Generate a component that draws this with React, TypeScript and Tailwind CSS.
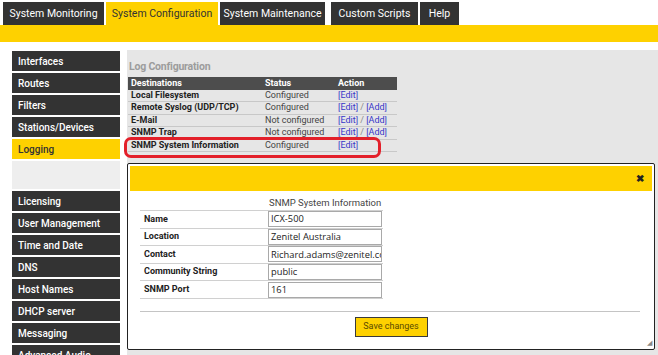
import React from 'react';

const tabs = [
  { label: 'System Monitoring', w: 'w-[101px]' },
  { label: 'System Configuration', w: 'w-[112px]', active: true },
  { label: 'System Maintenance', w: 'w-[105px]' },
  { label: 'Custom Scripts', w: 'w-[87px]', gapL: true },
  { label: 'Help', w: 'w-[39px]' },
];

const sideTop = ['Interfaces', 'Routes', 'Filters', 'Stations/Devices'];
const sideBottom = ['Licensing', 'User Management', 'Time and Date', 'DNS', 'Host Names', 'DHCP server', 'Messaging', 'Advanced Audio'];

const logRows = [
  { name: 'Local Filesystem', status: 'Configured', add: false },
  { name: 'Remote Syslog (UDP/TCP)', status: 'Configured', add: true },
  { name: 'E-Mail', status: 'Not configured', add: true },
  { name: 'SNMP Trap', status: 'Not configured', add: true },
  { name: 'SNMP System Information', status: 'Configured', add: false },
];

const fields = [
  { label: 'Name', value: 'ICX-500' },
  { label: 'Location', value: 'Zenitel Australia' },
  { label: 'Contact', value: 'Richard.adams@zenitel.com' },
  { label: 'Community String', value: 'public' },
  { label: 'SNMP Port', value: '161' },
];

const SideItem: React.FC<{ label: string; active?: boolean }> = ({ label, active }) => (
  <div
    className={`h-[20px] flex items-center pl-[6px] text-[10px] font-medium whitespace-nowrap ${
      active ? 'bg-[#fed100] text-[#333]' : 'bg-[#333333] text-white'
    }`}
  >
    {label}
  </div>
);

const App: React.FC = () => {
  return (
    <div className="w-[658px] h-[355px] overflow-hidden bg-white relative font-['Roboto',sans-serif]">
      {/* Top tabs */}
      <div className="flex items-end h-[25px] pl-[3px] pt-[2px] gap-[2px]">
        {tabs.map((t) => (
          <div
            key={t.label}
            className={`${t.w} h-[23px] flex items-center justify-center text-[10.5px] whitespace-nowrap ${t.gapL ? 'ml-[4px]' : ''} ${
              t.active ? 'bg-[#fed100] text-[#333]' : 'bg-[#333333] text-white'
            }`}
          >
            {t.label}
          </div>
        ))}
      </div>
      <div className="h-[17px] bg-[#fed100]" />

      <div className="flex pt-[8px]">
        {/* Sidebar */}
        <div className="w-[108px] ml-[12px] flex flex-col gap-[2px] pt-[1px] shrink-0">
          {sideTop.map((s) => (
            <SideItem key={s} label={s} />
          ))}
          <SideItem label="Logging" active />
          <div className="h-[28px] bg-[#eeeeee]" />
          {sideBottom.map((s) => (
            <SideItem key={s} label={s} />
          ))}
        </div>

        {/* Content */}
        <div className="flex-1 ml-[7px] bg-[#e6e6e6] h-[305px] pl-[1px]">
          <div className="pt-[9px] pl-[1px] text-[10.5px] tracking-[-0.2px] font-bold text-[#9c9c9c] h-[27px]">Log Configuration</div>
          <div className="w-[269px] text-[9px]">
            <div className="flex h-[13px] items-center bg-[#4d4d4d] text-white font-bold">
              <div className="w-[134px] pl-[3px]">Destinations</div>
              <div className="w-[73px] pl-[3px]">Status</div>
              <div className="flex-1 pl-[3px]">Action</div>
            </div>
            {logRows.map((r) => (
              <div key={r.name} className="flex h-[12.4px] items-center border-b border-[#c8c8c8]">
                <div className="w-[134px] pl-[3px] font-bold text-[#222]">{r.name}</div>
                <div className="w-[73px] pl-[3px] text-[#444]">{r.status}</div>
                <div className="flex-1 pl-[3px] text-[#888]">
                  <span className="text-[#3636c8]">[Edit]</span>
                  {r.add && (
                    <>
                      {' / '}
                      <span className="text-[#3636c8]">[Add]</span>
                    </>
                  )}
                </div>
              </div>
            ))}
          </div>
        </div>
      </div>

      {/* Red highlight annotation */}
      <div className="absolute left-[124px] top-[137px] w-[257px] h-[21px] border-[3px] border-[#e3202a] rounded-[7px]" />

      {/* Modal */}
      <div className="absolute left-[127px] top-[163px] w-[528px] h-[187px] bg-white border border-[#222] rounded-[2px] p-[2px] flex flex-col">
        <div className="h-[25px] bg-[#fed100] flex items-center justify-end pr-[8px]">
          <span className="text-[10px] font-bold text-[#222] leading-none">✖</span>
        </div>
        <div className="pl-[10px] pt-[6px] text-[9px]">
          <div className="w-[243px]">
            <div className="flex h-[14px] items-center border-b border-[#d0d0d0]">
              <div className="w-[128px]" />
              <div className="flex-1 text-[#444] pl-[1px] text-[9.5px] whitespace-nowrap">SNMP System Information</div>
            </div>
            {fields.map((f) => (
              <div key={f.label} className="flex h-[17.6px] items-center border-b border-[#d0d0d0]">
                <div className="w-[128px] pl-[4px] font-bold text-[#222]">{f.label}</div>
                <div className="w-[114px] h-[16px] border border-[#a9a9a9] bg-white px-[2px] flex items-center overflow-hidden whitespace-nowrap text-[9.3px] text-[#222] font-['Open_Sans',sans-serif]">
                  {f.value}
                </div>
              </div>
            ))}
          </div>
          <div className="mt-[12px] mr-[12px] border-t border-[#c4c4c4]" />
          <div className="flex justify-center pt-[5px] pr-[10px]">
            <div className="w-[73px] h-[20px] bg-[#fed100] border border-[#3a3a3a] flex items-center justify-center text-[9px] text-[#5a4a00]">
              Save changes
            </div>
          </div>
        </div>
        <div className="absolute right-[2px] bottom-[2px] text-[7px] leading-none text-[#888]">◢</div>
      </div>
    </div>
  );
};

export default App;
